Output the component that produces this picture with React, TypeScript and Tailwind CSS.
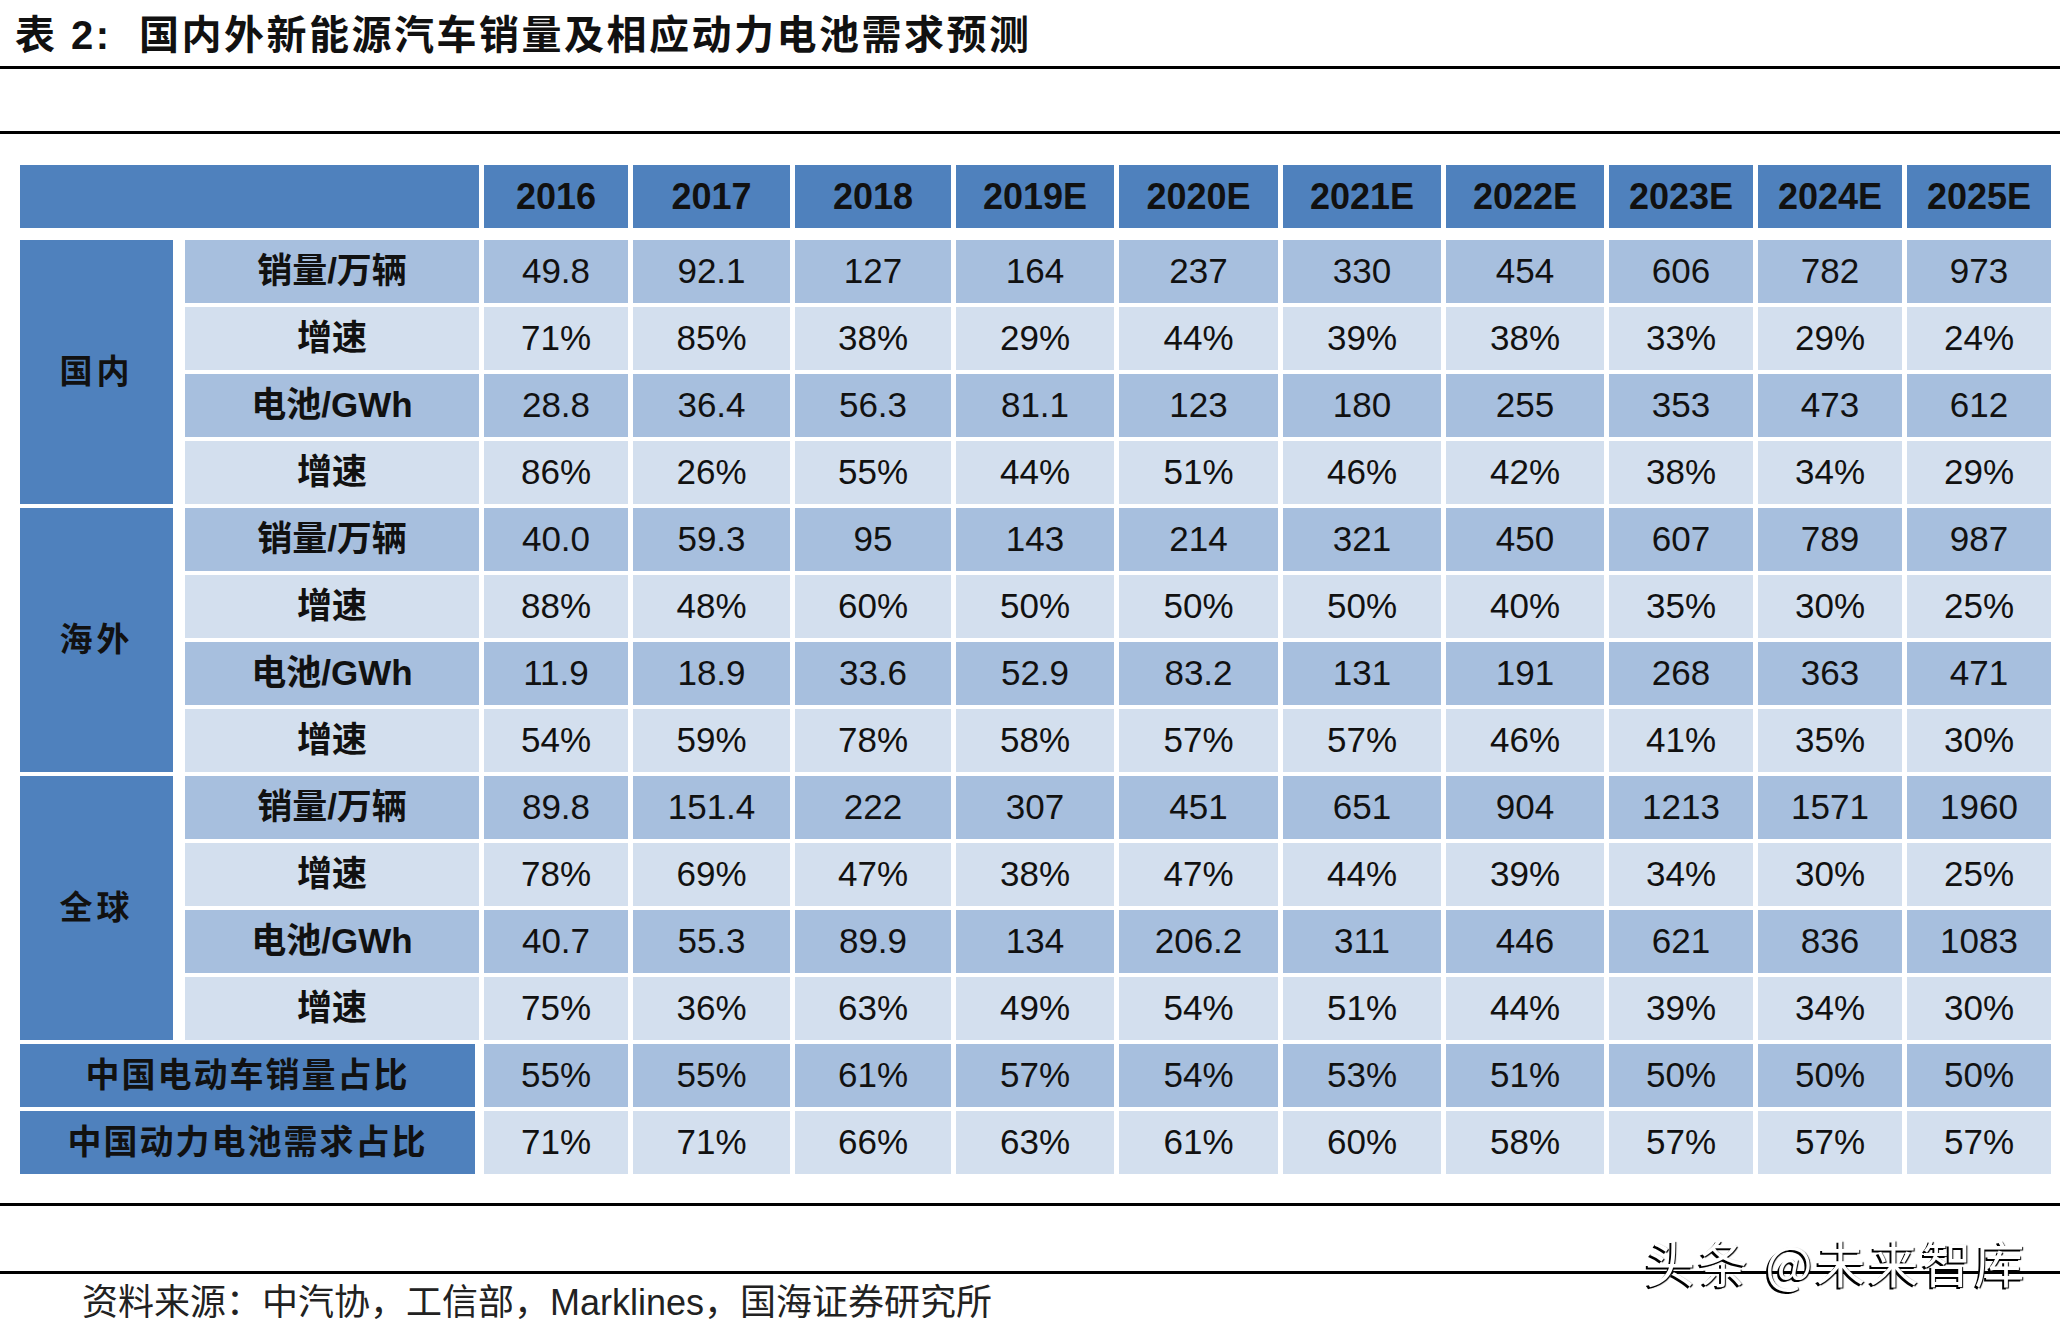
const years = ["2016", "2017", "2018", "2019E", "2020E", "2021E", "2022E", "2023E", "2024E", "2025E"];

const groups = [
  {
    name: "国内",
    rows: [
      ["销量/万辆", ["49.8", "92.1", "127", "164", "237", "330", "454", "606", "782", "973"]],
      ["增速", ["71%", "85%", "38%", "29%", "44%", "39%", "38%", "33%", "29%", "24%"]],
      ["电池/GWh", ["28.8", "36.4", "56.3", "81.1", "123", "180", "255", "353", "473", "612"]],
      ["增速", ["86%", "26%", "55%", "44%", "51%", "46%", "42%", "38%", "34%", "29%"]],
    ],
  },
  {
    name: "海外",
    rows: [
      ["销量/万辆", ["40.0", "59.3", "95", "143", "214", "321", "450", "607", "789", "987"]],
      ["增速", ["88%", "48%", "60%", "50%", "50%", "50%", "40%", "35%", "30%", "25%"]],
      ["电池/GWh", ["11.9", "18.9", "33.6", "52.9", "83.2", "131", "191", "268", "363", "471"]],
      ["增速", ["54%", "59%", "78%", "58%", "57%", "57%", "46%", "41%", "35%", "30%"]],
    ],
  },
  {
    name: "全球",
    rows: [
      ["销量/万辆", ["89.8", "151.4", "222", "307", "451", "651", "904", "1213", "1571", "1960"]],
      ["增速", ["78%", "69%", "47%", "38%", "47%", "44%", "39%", "34%", "30%", "25%"]],
      ["电池/GWh", ["40.7", "55.3", "89.9", "134", "206.2", "311", "446", "621", "836", "1083"]],
      ["增速", ["75%", "36%", "63%", "49%", "54%", "51%", "44%", "39%", "34%", "30%"]],
    ],
  },
] as const;

const shares = [
  ["中国电动车销量占比", ["55%", "55%", "61%", "57%", "54%", "53%", "51%", "50%", "50%", "50%"]],
  ["中国动力电池需求占比", ["71%", "71%", "66%", "63%", "61%", "60%", "58%", "57%", "57%", "57%"]],
] as const;

const gridCols =
  "grid grid-cols-[160px_294px_144px_157px_156px_158px_159px_158px_158px_144px_144px_144px] gap-x-[5px]";

// 中文字体 + Arial 宽度的拉丁字体
const cjk = "font-['Liberation_Sans','Noto_Sans_CJK_SC',sans-serif]";

export default function App() {
  return (
    <div className={`relative w-[2060px] h-[1332px] bg-white overflow-hidden text-[#111] ${cjk}`}>
      {/* 标题 */}
      <div className="h-[66px] pl-[15px] pt-[4px] flex items-center">
        <h1 className="text-[40px] font-bold leading-none tracking-[2.5px]">
          表 2:&nbsp; 国内外新能源汽车销量及相应动力电池需求预测
        </h1>
      </div>
      <div className="h-[3px] bg-black" />
      <div className="h-[62px]" />
      <div className="h-[3px] bg-black" />

      {/* 表格 */}
      <div className="ml-[20px] mt-[31px]">
        <div className={`${gridCols} h-[63px] mb-[12px]`}>
          <div className="col-span-2 bg-[#4f81bd]" />
          {years.map((y) => (
            <div key={y} className="bg-[#4f81bd] flex items-center justify-center text-[36px] font-bold">
              {y}
            </div>
          ))}
        </div>

        <div className={`${gridCols} auto-rows-[63px] gap-y-[4px]`}>
          {groups.map((g) => (
            <>
              <div
                key={g.name}
                className="row-span-4 mr-[7px] bg-[#4f81bd] flex items-center justify-center text-[33px] font-bold tracking-[4px]"
              >
                {g.name}
              </div>
              {g.rows.map(([label, vals], ri) => {
                const bg = ri % 2 === 0 ? "bg-[#a7bfde]" : "bg-[#d3dfee]";
                return (
                  <>
                    <div
                      key={g.name + ri}
                      className={`${bg} flex items-center justify-center text-[35px] font-bold`}
                    >
                      {label}
                    </div>
                    {vals.map((v, i) => (
                      <div
                        key={g.name + ri + "-" + i}
                        className={`${bg} flex items-center justify-center text-[35px]`}
                      >
                        {v}
                      </div>
                    ))}
                  </>
                );
              })}
            </>
          ))}

          {shares.map(([label, vals], ri) => {
            const bg = ri === 0 ? "bg-[#a7bfde]" : "bg-[#d3dfee]";
            return (
              <>
                <div
                  key={label}
                  className="col-span-2 mr-[4px] bg-[#4f81bd] flex items-center justify-center text-[34px] font-bold tracking-[2px]"
                >
                  {label}
                </div>
                {vals.map((v, i) => (
                  <div key={label + i} className={`${bg} flex items-center justify-center text-[35px]`}>
                    {v}
                  </div>
                ))}
              </>
            );
          })}
        </div>
      </div>

      <div className="h-[29px]" />
      <div className="h-[3px] bg-black" />
      <div className="h-[65px]" />
      <div className="h-[3px] bg-black" />

      {/* 资料来源 */}
      <div className="pl-[82px] pt-[11px] text-[36px] leading-none text-[#222]">
        资料来源：中汽协，工信部，Marklines，国海证券研究所
      </div>

      {/* 水印 */}
      <div className="absolute left-[1645px] top-[1236px] text-[50px] leading-none tracking-[3px] text-white font-['Noto_Sans_CJK_SC',sans-serif] [text-shadow:-2px_2px_0_#000,1px_1px_1px_#000]">
        头条 @未来智库
      </div>
    </div>
  );
}
